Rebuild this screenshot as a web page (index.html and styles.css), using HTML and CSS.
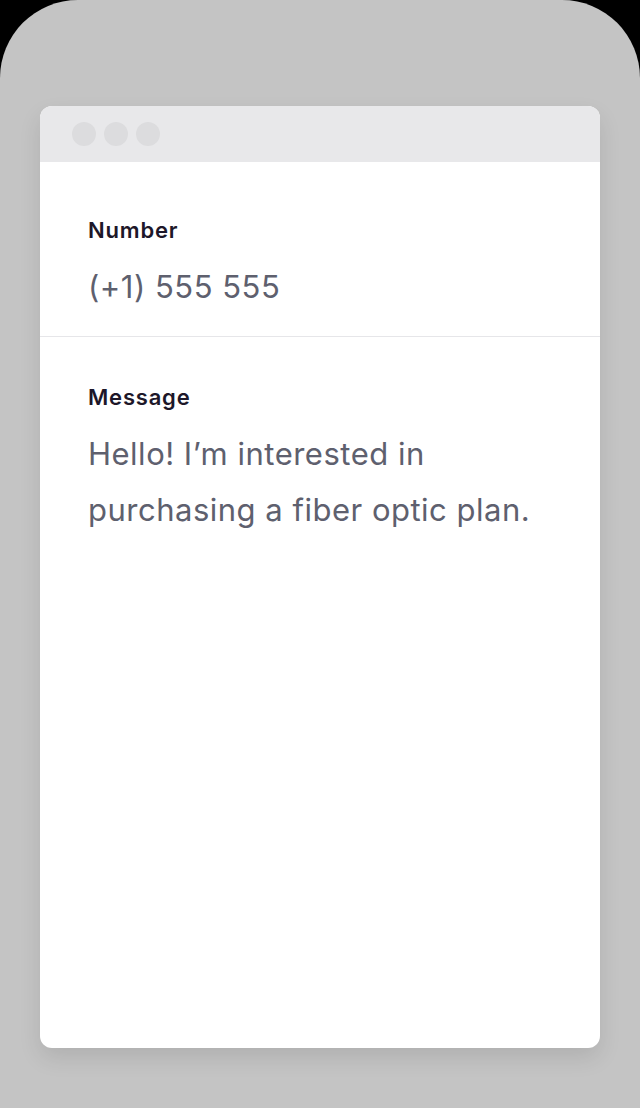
FILE: index.html
```html
<!DOCTYPE html>
<html lang="en">
<head>
    <meta charset="UTF-8">
    <meta name="viewport" content="width=device-width, initial-scale=1.0">
    <title>Contact Message</title>
    <link rel="stylesheet" href="styles.css">
</head>
<body>
    <div class="phone">
        <div class="window">
            <div class="window-bar">
                <span class="dot"></span>
                <span class="dot"></span>
                <span class="dot"></span>
            </div>
            <div class="field field-number">
                <div class="field-label">Number</div>
                <div class="field-value">(+1) 555 555</div>
            </div>
            <div class="field field-message">
                <div class="field-label">Message</div>
                <div class="field-value">Hello! I’m interested in purchasing a fiber optic plan.</div>
            </div>
        </div>
    </div>
</body>
</html>
```

FILE: styles.css
```css
/* General Styles */
body {
    margin: 0;
    padding: 0;
    background-color: #000;
    font-family: Inter, "Noto Sans", Arial, sans-serif;
}
.phone {
    background-color: #c4c4c4;
    border-radius: 78px 78px 0 0;
    height: 1108px;
    box-sizing: border-box;
    padding: 106px 40px 0;
}
.window {
    background-color: #fff;
    border-radius: 12px;
    height: 942px;
    overflow: hidden;
    box-shadow: 0 10px 22px rgba(0, 0, 0, 0.1);
}
.window-bar {
    background-color: #e8e8ea;
    height: 56px;
    display: flex;
    align-items: center;
    gap: 8px;
    padding: 0 32px;
}
.dot {
    width: 24px;
    height: 24px;
    border-radius: 50%;
    background-color: #dcdcde;
}
.field {
    padding: 0 48px;
}
.field-number {
    padding-top: 54px;
    padding-bottom: 21px;
    border-bottom: 1px solid #e6e6e9;
}
.field-message {
    padding-top: 46px;
}
.field-label {
    font-size: 22px;
    line-height: 28px;
    font-weight: 600;
    letter-spacing: 0.8px;
    color: #1d1729;
    margin-bottom: 15px;
}
.field-value {
    font-size: 31px;
    line-height: 56px;
    letter-spacing: 0.5px;
    color: #5e606e;
    max-width: 460px;
}
```
